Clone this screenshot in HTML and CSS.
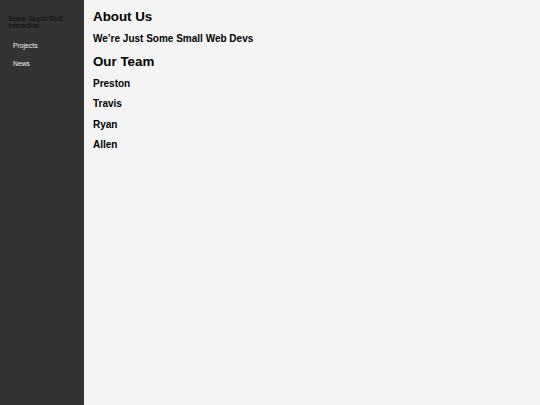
FILE: index.html
```html
<!DOCTYPE html>
<html>
<head>
<meta charset="utf-8">
<link rel="stylesheet" href="styles.css">
</head>
<body>
<div class="layout">
  <nav class="sidebar">
    <div class="brand">Some Stupid Stuff Interactive</div>
    <ul class="links">
      <li><a href="#">Projects</a></li>
      <li><a href="#">News</a></li>
    </ul>
  </nav>
  <main class="content">
    <h1 class="title">About Us</h1>
    <h2 class="sub">We’re Just Some Small Web Devs</h2>
    <h1 class="title">Our Team</h1>
    <h2 class="name">Preston</h2>
    <h2 class="name">Travis</h2>
    <h2 class="name">Ryan</h2>
    <h2 class="name">Allen</h2>
  </main>
</div>
</body>
</html>
```
FILE: styles.css
```css
html, body {
  margin: 0;
  padding: 0;
  height: 100%;
}
body {
  font-family: "Liberation Sans", Arial, sans-serif;
  background: #f4f4f4;
  color: #000;
}
.layout {
  display: flex;
  min-height: 100%;
}
.sidebar {
  width: 84px;
  flex: 0 0 84px;
  background: #333333;
  padding: 14.5px 0 0 8px;
  box-sizing: border-box;
}
.brand {
  font-size: 6.8px;
  line-height: 7.6px;
  color: #0a0a0a;
  width: 60px;
}
.links {
  list-style: none;
  margin: 12px 0 0 0;
  padding: 0 0 0 5px;
}
.links li {
  font-size: 6.8px;
  line-height: 7.6px;
  margin-bottom: 10.7px;
}
.links a {
  color: #f5f5f5;
  text-decoration: none;
}
.content {
  flex: 1;
  padding: 0 0 0 9px;
  display: flow-root;
}
.title {
  font-size: 13.33px;
  line-height: 15.3px;
  font-weight: bold;
  margin: 9px 0 9px 0;
}
.sub {
  font-size: 10px;
  line-height: 11.5px;
  font-weight: bold;
  margin: 9px 0 9px 0;
}
.name {
  font-size: 10px;
  line-height: 12px;
  font-weight: bold;
  margin: 8.3px 0 8.3px 0;
}
```
